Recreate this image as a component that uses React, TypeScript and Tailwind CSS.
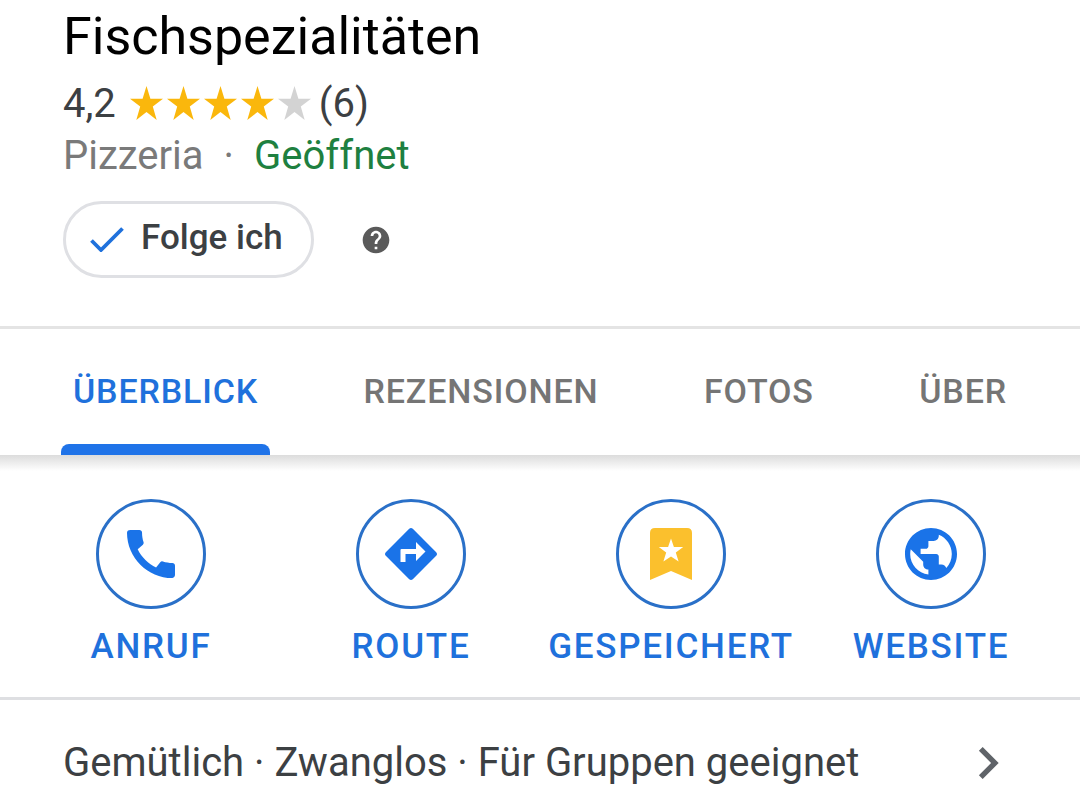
import React from 'react';
import { MdCall, MdChevronRight, MdHelp } from 'react-icons/md';

interface Action {
    label: string;
    icon: React.ReactNode;
}

const tabs = ['ÜBERBLICK', 'REZENSIONEN', 'FOTOS', 'ÜBER'];

const Star = ({ filled }: { filled: boolean }) => (
    <svg viewBox="0 0 33 36" className={`w-[33px] h-9 ${filled ? 'text-[#fab70c]' : 'text-[#d3d3d3]'}`} aria-hidden="true">
        <path d="M16.5 0l3.9 12.800H33l-10.200 7.800 3.900 13.400-10.200-8-10.200 8 3.900-13.400L0 12.800h12.600z" fill="currentColor" />
    </svg>
);

const CheckIcon = () => (
    <svg viewBox="0 0 34 26" className="w-[34px] h-[26px] mr-[17px] text-[#1f71dc]" aria-hidden="true">
        <path d="M1.500 14.500l9.500 9.500L32.500 2.500" fill="none" stroke="currentColor" strokeWidth="3.800" />
    </svg>
);

const RouteIcon = () => (
    <svg viewBox="0 0 52 52" className="size-[52px]" aria-hidden="true">
        <path
            d="M24.200.8q1.800-1.600 3.600 0l23.400 23.400q1.600 1.800 0 3.600L27.800 51.200q-1.800 1.600-3.600 0L.8 27.800q-1.600-1.800 0-3.600zM31 14v7H16.500q-1 0-1 1V34h5v-8H31v7l9.500-9.500z"
            fill="currentColor"
            fillRule="evenodd"
        />
    </svg>
);

const SavedIcon = () => (
    <svg viewBox="0 0 44 54" className="w-11 h-[54px]" aria-hidden="true">
        <path d="M6 1h32q5 0 5 5v47L22 44 1 53V6q0-5 5-5z" fill="#fbc02d" />
        <path d="M22 11.500l2.900 8.500h9.300l-7.400 5.400 2.800 9L22 29.500l-7.600 4.900 2.800-9L9.800 20h9.300z" fill="#fff" />
    </svg>
);

const GlobeIcon = () => (
    <svg viewBox="2 2 20 20" className="size-[52px]" aria-hidden="true">
        <path
            d="M12 2C6.480 2 2 6.480 2 12s4.480 10 10 10 10-4.480 10-10S17.520 2 12 2zm-1 17.930c-3.950-.49-7-3.850-7-7.930 0-.62.08-1.210.21-1.790L9 15v1c0 1.100.9 2 2 2v1.930zm6.900-2.540c-.26-.81-1-1.390-1.900-1.390h-1v-3c0-.55-.45-1-1-1H8v-2h2c.55 0 1-.45 1-1V7h2c1.100 0 2-.9 2-2v-.41c2.930 1.190 5 4.060 5 7.410 0 2.080-.8 3.970-2.100 5.390z"
            fill="currentColor"
        />
    </svg>
);

const actions: Action[] = [
    { label: 'ANRUF', icon: <MdCall size={64} /> },
    { label: 'ROUTE', icon: <RouteIcon /> },
    { label: 'GESPEICHERT', icon: <SavedIcon /> },
    { label: 'WEBSITE', icon: <GlobeIcon /> },
];

const Rating = () => (
    <div className="flex items-center text-[40px] leading-[52px] text-[#3c4043]">
        <span>4,2</span>
        <span className="flex gap-1 ml-3.5 mr-2" role="img" aria-label="4,2 von 5 Sternen">
            {[1, 2, 3, 4, 5].map((n) => (
                <Star key={n} filled={n <= 4} />
            ))}
        </span>
        <span>(6)</span>
    </div>
);

export default function App() {
    return (
        <main className="min-h-screen bg-white font-[Roboto,sans-serif] overflow-x-hidden">
            <header className="px-[63px] pt-[3px] pb-12 border-b-3 border-[#e4e4e4]">
                <h1 className="text-[52px] leading-[68px] text-black">Fischspezialitäten</h1>
                <div className="mt-[7px]">
                    <Rating />
                </div>
                <p className="flex text-[40px] leading-[52px] text-[#7a7a7a]">
                    <span>Pizzeria</span>
                    <span className="mx-5">·</span>
                    <span className="text-[#1e8040]">Geöffnet</span>
                </p>
                <div className="flex items-center mt-[19px]">
                    <button className="flex items-center h-[77px] pl-6 pr-7 pb-0.5 rounded-full border-3 border-[#dfe0e4] text-[35px] font-medium text-[#3c4043]">
                        <CheckIcon />
                        Folge ich
                    </button>
                    <button aria-label="Hilfe" className="ml-[46px] text-[#5a5a5a]">
                        <MdHelp size={32} />
                    </button>
                </div>
            </header>

            <nav className="flex justify-between px-[61px]">
                {tabs.map((tab, i) => (
                    <button
                        key={tab}
                        className={`flex flex-col items-center text-[34px] leading-[124px] tracking-wide font-medium ${i === 0 ? 'text-[#1f71dc]' : 'text-[#757575]'}`}
                    >
                        <span className="h-[115px] px-3">{tab}</span>
                        {i === 0 && <span className="h-[11px] w-full rounded-t-lg bg-[#1f73e8]" />}
                    </button>
                ))}
            </nav>
            <div className="h-4 bg-linear-to-b from-[#dcdcdc] to-white" />

            <section className="grid grid-cols-4 pl-[21px] pr-[19px] pt-7 pb-[26px] border-b-3 border-[#dedfe2]">
                {actions.map((action) => (
                    <button key={action.label} className="flex flex-col items-center text-[#1a73e8]">
                        <span className="flex items-center justify-center size-[110px] rounded-full border-3 border-[#2a70c8]">
                            {action.icon}
                        </span>
                        <span className="mt-3.5 text-[35px] leading-[48px] font-medium tracking-wider text-[#1f71dc]">{action.label}</span>
                    </button>
                ))}
            </section>

            <button className="flex items-center justify-between w-full pl-[63px] pr-[60px] pt-[31px] text-[40px] leading-[52px] text-[#3c4043]">
                <span>Gemütlich · Zwanglos · Für Gruppen geeignet</span>
                <MdChevronRight size={64} className="text-[#5f6368]" />
            </button>
        </main>
    );
}
